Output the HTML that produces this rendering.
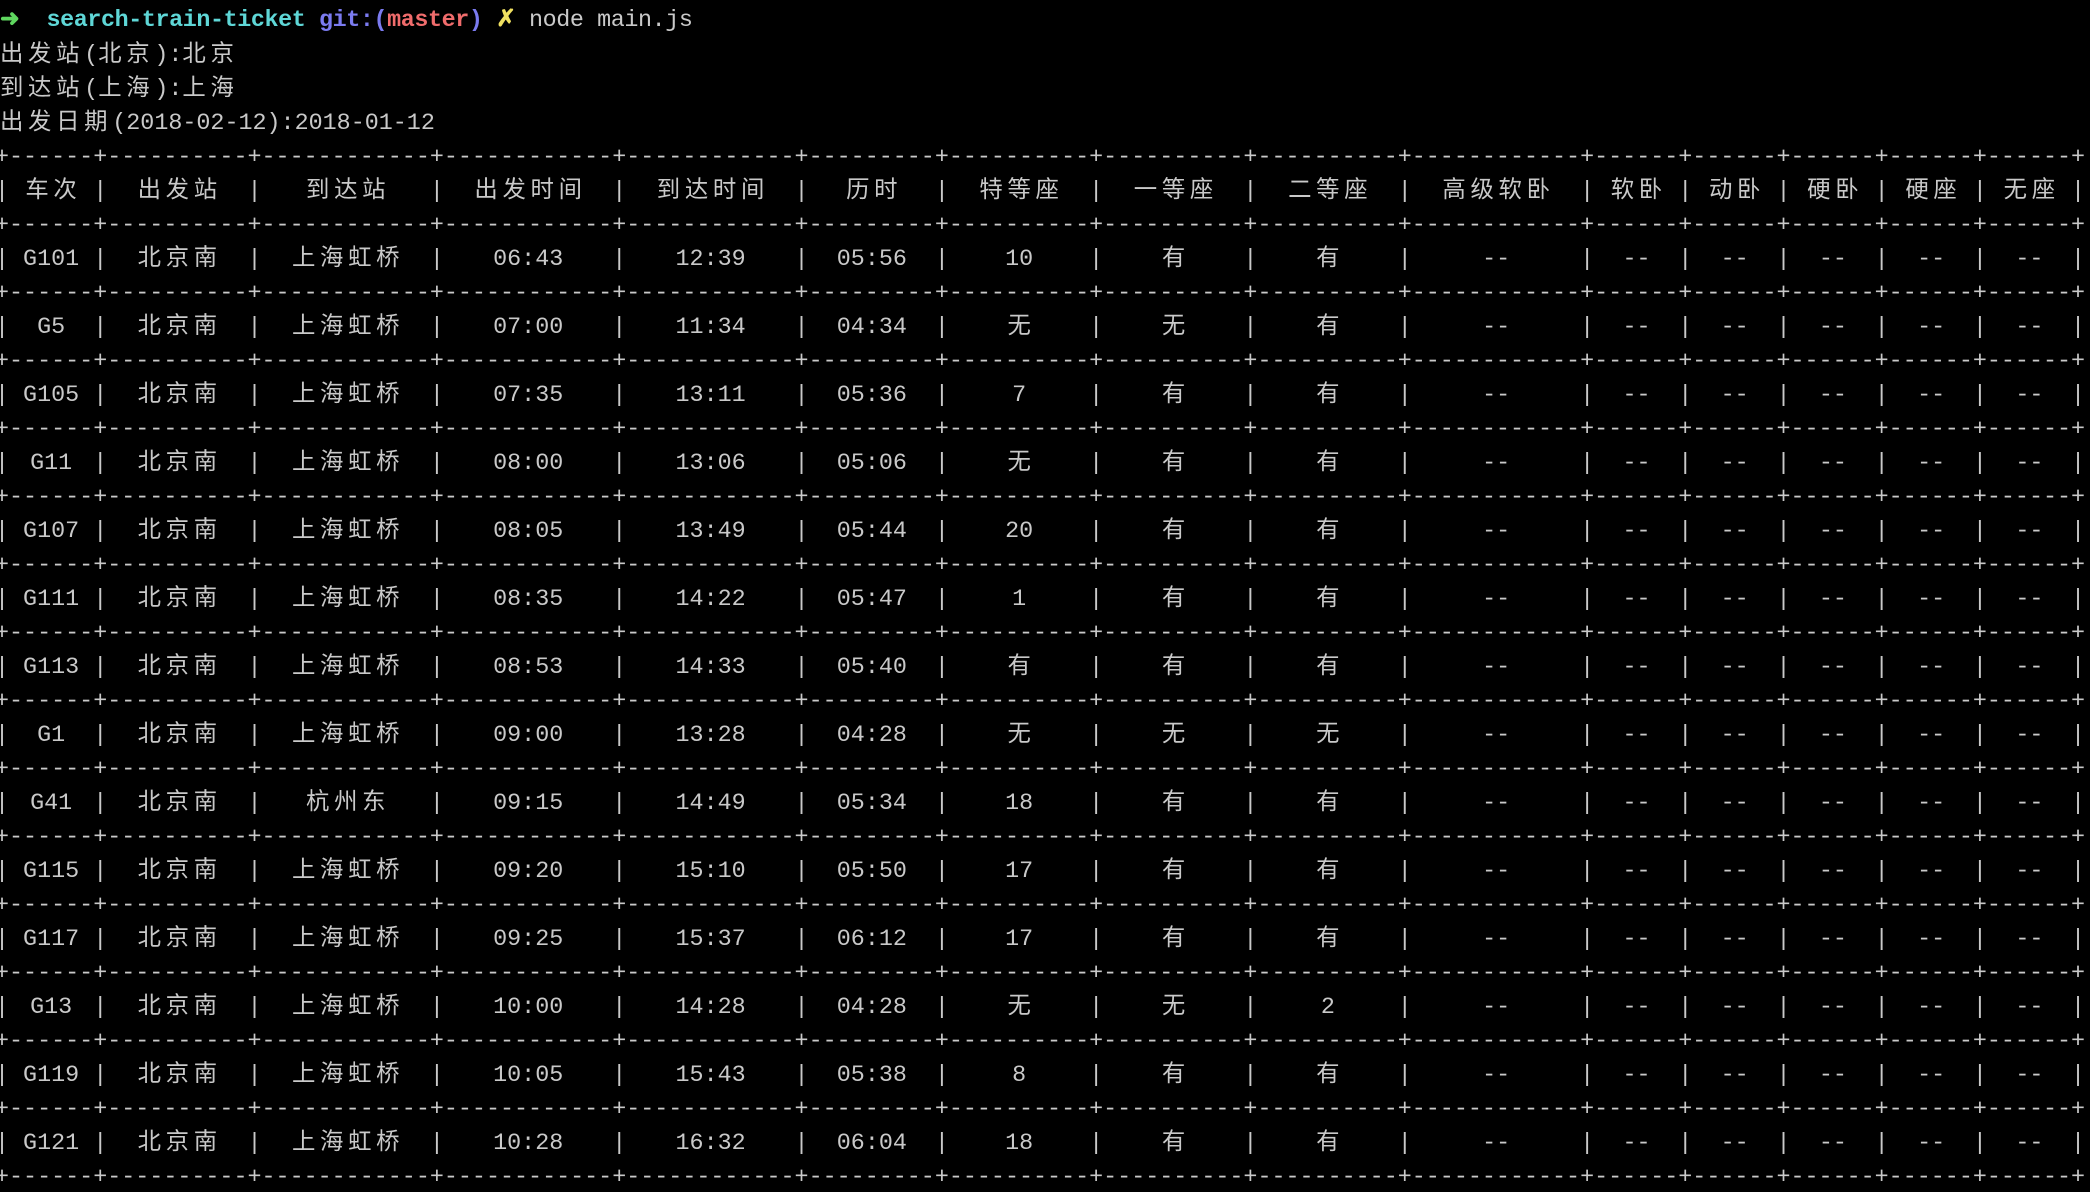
<!DOCTYPE html>
<html><head><meta charset="utf-8"><style>
html,body{margin:0;padding:0;background:#000;width:2090px;height:1192px;overflow:hidden}
body{position:relative;font-family:"Liberation Mono","Noto Sans CJK SC",monospace;font-size:23.38px;color:#c9c9c9}
#w{position:absolute;left:0;top:3px;width:2090px;height:1192px}
.l{position:absolute;left:-5px;height:34px;line-height:34px;white-space:pre;width:2200px}
.l pre{margin:0;font:inherit;position:absolute;left:0;top:0}
.l span{position:absolute;top:0;text-align:center;white-space:nowrap}
.z{letter-spacing:4.68px;text-indent:4.68px}
.y{letter-spacing:4.68px}
.a{left:14.03px;width:84.2px}.b{left:112.2px;width:140.3px}.c{left:266.6px;width:168.4px}
.d{left:449px;width:168.4px}.e{left:631.4px;width:168.4px}.f{left:813.7px;width:126.3px}
.g{left:954px;width:140.3px}.h{left:1108.4px;width:140.3px}.i{left:1262.7px;width:140.3px}
.j{left:1417px;width:168.4px}.k{left:1599.4px;width:84.2px}.m{left:1697.6px;width:84.2px}
.n{left:1795.8px;width:84.2px}.o{left:1894px;width:84.2px}.p{left:1992.3px;width:84.2px}
.t{position:absolute;left:0;height:34px;line-height:34px;white-space:pre}
</style></head><body><div id="w">
<div class="t" style="top:1px;letter-spacing:-0.4px"><span style="color:#5fd75f;font-weight:bold">➜</span>  <b style="color:#5fd7d7">search-train-ticket</b> <b style="color:#7b7bf0">git:(</b><b style="color:#f06c6c">master</b><b style="color:#7b7bf0">)</b> <b style="color:#f0e060">✗</b> node main.js</div>
<div class="t" style="top:36px"><span class="y">出发站</span>(<span class="y">北京</span>):<span class="y">北京</span></div>
<div class="t" style="top:70px"><span class="y">到达站</span>(<span class="y">上海</span>):<span class="y">上海</span></div>
<div class="t" style="top:104px"><span class="y">出发日期</span>(2018-02-12):2018-01-12</div>

<div class="l" style="top:138px"><pre>+------+----------+------------+------------+------------+---------+----------+----------+----------+------------+------+------+------+------+------+</pre></div>
<div class="l" style="top:172px"><pre>|      |          |            |            |            |         |          |          |          |            |      |      |      |      |      |</pre><span class="a z">车次</span><span class="b z">出发站</span><span class="c z">到达站</span><span class="d z">出发时间</span><span class="e z">到达时间</span><span class="f z">历时</span><span class="g z">特等座</span><span class="h z">一等座</span><span class="i z">二等座</span><span class="j z">高级软卧</span><span class="k z">软卧</span><span class="m z">动卧</span><span class="n z">硬卧</span><span class="o z">硬座</span><span class="p z">无座</span></div>
<div class="l" style="top:206px"><pre>+------+----------+------------+------------+------------+---------+----------+----------+----------+------------+------+------+------+------+------+</pre></div>

<div class="l" style="top:240px"><pre>|      |          |            |            |            |         |          |          |          |            |      |      |      |      |      |</pre><span class="a">G101</span><span class="b z">北京南</span><span class="c z">上海虹桥</span><span class="d">06:43</span><span class="e">12:39</span><span class="f">05:56</span><span class="g">10</span><span class="h z">有</span><span class="i z">有</span><span class="j">--</span><span class="k">--</span><span class="m">--</span><span class="n">--</span><span class="o">--</span><span class="p">--</span></div>
<div class="l" style="top:274px"><pre>+------+----------+------------+------------+------------+---------+----------+----------+----------+------------+------+------+------+------+------+</pre></div>

<div class="l" style="top:308px"><pre>|      |          |            |            |            |         |          |          |          |            |      |      |      |      |      |</pre><span class="a">G5</span><span class="b z">北京南</span><span class="c z">上海虹桥</span><span class="d">07:00</span><span class="e">11:34</span><span class="f">04:34</span><span class="g z">无</span><span class="h z">无</span><span class="i z">有</span><span class="j">--</span><span class="k">--</span><span class="m">--</span><span class="n">--</span><span class="o">--</span><span class="p">--</span></div>
<div class="l" style="top:342px"><pre>+------+----------+------------+------------+------------+---------+----------+----------+----------+------------+------+------+------+------+------+</pre></div>

<div class="l" style="top:376px"><pre>|      |          |            |            |            |         |          |          |          |            |      |      |      |      |      |</pre><span class="a">G105</span><span class="b z">北京南</span><span class="c z">上海虹桥</span><span class="d">07:35</span><span class="e">13:11</span><span class="f">05:36</span><span class="g">7</span><span class="h z">有</span><span class="i z">有</span><span class="j">--</span><span class="k">--</span><span class="m">--</span><span class="n">--</span><span class="o">--</span><span class="p">--</span></div>
<div class="l" style="top:410px"><pre>+------+----------+------------+------------+------------+---------+----------+----------+----------+------------+------+------+------+------+------+</pre></div>

<div class="l" style="top:444px"><pre>|      |          |            |            |            |         |          |          |          |            |      |      |      |      |      |</pre><span class="a">G11</span><span class="b z">北京南</span><span class="c z">上海虹桥</span><span class="d">08:00</span><span class="e">13:06</span><span class="f">05:06</span><span class="g z">无</span><span class="h z">有</span><span class="i z">有</span><span class="j">--</span><span class="k">--</span><span class="m">--</span><span class="n">--</span><span class="o">--</span><span class="p">--</span></div>
<div class="l" style="top:478px"><pre>+------+----------+------------+------------+------------+---------+----------+----------+----------+------------+------+------+------+------+------+</pre></div>

<div class="l" style="top:512px"><pre>|      |          |            |            |            |         |          |          |          |            |      |      |      |      |      |</pre><span class="a">G107</span><span class="b z">北京南</span><span class="c z">上海虹桥</span><span class="d">08:05</span><span class="e">13:49</span><span class="f">05:44</span><span class="g">20</span><span class="h z">有</span><span class="i z">有</span><span class="j">--</span><span class="k">--</span><span class="m">--</span><span class="n">--</span><span class="o">--</span><span class="p">--</span></div>
<div class="l" style="top:546px"><pre>+------+----------+------------+------------+------------+---------+----------+----------+----------+------------+------+------+------+------+------+</pre></div>

<div class="l" style="top:580px"><pre>|      |          |            |            |            |         |          |          |          |            |      |      |      |      |      |</pre><span class="a">G111</span><span class="b z">北京南</span><span class="c z">上海虹桥</span><span class="d">08:35</span><span class="e">14:22</span><span class="f">05:47</span><span class="g">1</span><span class="h z">有</span><span class="i z">有</span><span class="j">--</span><span class="k">--</span><span class="m">--</span><span class="n">--</span><span class="o">--</span><span class="p">--</span></div>
<div class="l" style="top:614px"><pre>+------+----------+------------+------------+------------+---------+----------+----------+----------+------------+------+------+------+------+------+</pre></div>

<div class="l" style="top:648px"><pre>|      |          |            |            |            |         |          |          |          |            |      |      |      |      |      |</pre><span class="a">G113</span><span class="b z">北京南</span><span class="c z">上海虹桥</span><span class="d">08:53</span><span class="e">14:33</span><span class="f">05:40</span><span class="g z">有</span><span class="h z">有</span><span class="i z">有</span><span class="j">--</span><span class="k">--</span><span class="m">--</span><span class="n">--</span><span class="o">--</span><span class="p">--</span></div>
<div class="l" style="top:682px"><pre>+------+----------+------------+------------+------------+---------+----------+----------+----------+------------+------+------+------+------+------+</pre></div>

<div class="l" style="top:716px"><pre>|      |          |            |            |            |         |          |          |          |            |      |      |      |      |      |</pre><span class="a">G1</span><span class="b z">北京南</span><span class="c z">上海虹桥</span><span class="d">09:00</span><span class="e">13:28</span><span class="f">04:28</span><span class="g z">无</span><span class="h z">无</span><span class="i z">无</span><span class="j">--</span><span class="k">--</span><span class="m">--</span><span class="n">--</span><span class="o">--</span><span class="p">--</span></div>
<div class="l" style="top:750px"><pre>+------+----------+------------+------------+------------+---------+----------+----------+----------+------------+------+------+------+------+------+</pre></div>

<div class="l" style="top:784px"><pre>|      |          |            |            |            |         |          |          |          |            |      |      |      |      |      |</pre><span class="a">G41</span><span class="b z">北京南</span><span class="c z">杭州东</span><span class="d">09:15</span><span class="e">14:49</span><span class="f">05:34</span><span class="g">18</span><span class="h z">有</span><span class="i z">有</span><span class="j">--</span><span class="k">--</span><span class="m">--</span><span class="n">--</span><span class="o">--</span><span class="p">--</span></div>
<div class="l" style="top:818px"><pre>+------+----------+------------+------------+------------+---------+----------+----------+----------+------------+------+------+------+------+------+</pre></div>

<div class="l" style="top:852px"><pre>|      |          |            |            |            |         |          |          |          |            |      |      |      |      |      |</pre><span class="a">G115</span><span class="b z">北京南</span><span class="c z">上海虹桥</span><span class="d">09:20</span><span class="e">15:10</span><span class="f">05:50</span><span class="g">17</span><span class="h z">有</span><span class="i z">有</span><span class="j">--</span><span class="k">--</span><span class="m">--</span><span class="n">--</span><span class="o">--</span><span class="p">--</span></div>
<div class="l" style="top:886px"><pre>+------+----------+------------+------------+------------+---------+----------+----------+----------+------------+------+------+------+------+------+</pre></div>

<div class="l" style="top:920px"><pre>|      |          |            |            |            |         |          |          |          |            |      |      |      |      |      |</pre><span class="a">G117</span><span class="b z">北京南</span><span class="c z">上海虹桥</span><span class="d">09:25</span><span class="e">15:37</span><span class="f">06:12</span><span class="g">17</span><span class="h z">有</span><span class="i z">有</span><span class="j">--</span><span class="k">--</span><span class="m">--</span><span class="n">--</span><span class="o">--</span><span class="p">--</span></div>
<div class="l" style="top:954px"><pre>+------+----------+------------+------------+------------+---------+----------+----------+----------+------------+------+------+------+------+------+</pre></div>

<div class="l" style="top:988px"><pre>|      |          |            |            |            |         |          |          |          |            |      |      |      |      |      |</pre><span class="a">G13</span><span class="b z">北京南</span><span class="c z">上海虹桥</span><span class="d">10:00</span><span class="e">14:28</span><span class="f">04:28</span><span class="g z">无</span><span class="h z">无</span><span class="i">2</span><span class="j">--</span><span class="k">--</span><span class="m">--</span><span class="n">--</span><span class="o">--</span><span class="p">--</span></div>
<div class="l" style="top:1022px"><pre>+------+----------+------------+------------+------------+---------+----------+----------+----------+------------+------+------+------+------+------+</pre></div>

<div class="l" style="top:1056px"><pre>|      |          |            |            |            |         |          |          |          |            |      |      |      |      |      |</pre><span class="a">G119</span><span class="b z">北京南</span><span class="c z">上海虹桥</span><span class="d">10:05</span><span class="e">15:43</span><span class="f">05:38</span><span class="g">8</span><span class="h z">有</span><span class="i z">有</span><span class="j">--</span><span class="k">--</span><span class="m">--</span><span class="n">--</span><span class="o">--</span><span class="p">--</span></div>
<div class="l" style="top:1090px"><pre>+------+----------+------------+------------+------------+---------+----------+----------+----------+------------+------+------+------+------+------+</pre></div>

<div class="l" style="top:1124px"><pre>|      |          |            |            |            |         |          |          |          |            |      |      |      |      |      |</pre><span class="a">G121</span><span class="b z">北京南</span><span class="c z">上海虹桥</span><span class="d">10:28</span><span class="e">16:32</span><span class="f">06:04</span><span class="g">18</span><span class="h z">有</span><span class="i z">有</span><span class="j">--</span><span class="k">--</span><span class="m">--</span><span class="n">--</span><span class="o">--</span><span class="p">--</span></div>
<div class="l" style="top:1158px"><pre>+------+----------+------------+------------+------------+---------+----------+----------+----------+------------+------+------+------+------+------+</pre></div>
</div></body></html>
